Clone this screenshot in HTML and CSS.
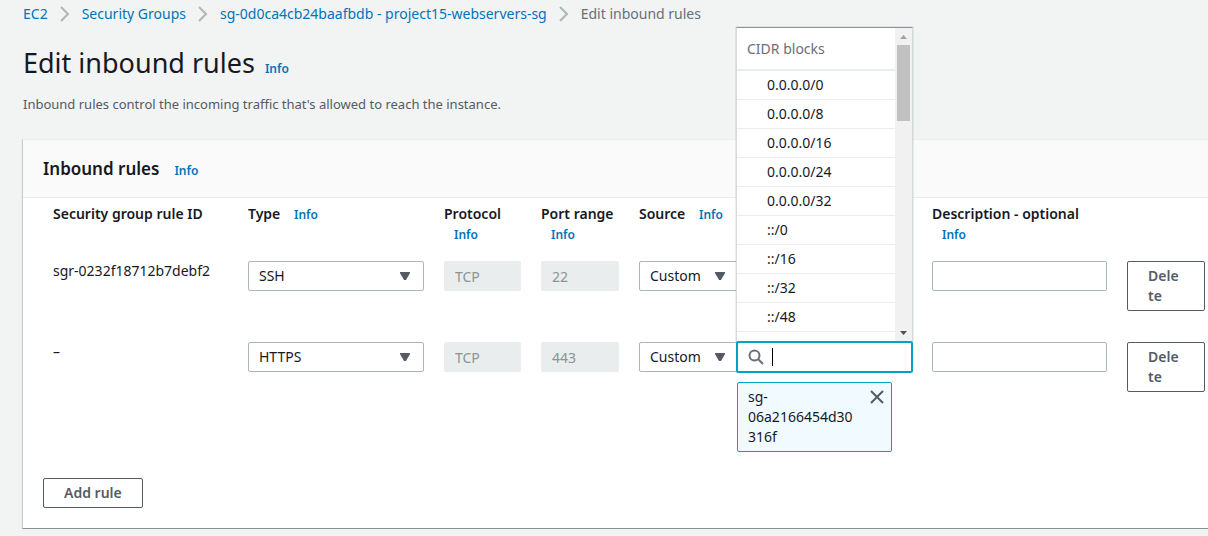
FILE: index.html
```html
<!DOCTYPE html>
<html lang="en">
<head>
<meta charset="utf-8">
<title>Edit inbound rules</title>
<link rel="stylesheet" href="styles.css">
</head>
<body>
<nav class="crumbs" aria-label="Breadcrumbs">
  <a href="#">EC2</a>
  <svg class="chevron" viewBox="0 0 10 16"><path d="M1 1l7 7-7 7"/></svg>
  <a href="#">Security Groups</a>
  <svg class="chevron" viewBox="0 0 10 16"><path d="M1 1l7 7-7 7"/></svg>
  <a href="#">sg-0d0ca4cb24baafbdb - project15-webservers-sg</a>
  <svg class="chevron" viewBox="0 0 10 16"><path d="M1 1l7 7-7 7"/></svg>
  <span class="current">Edit inbound rules</span>
</nav>
<main>
  <header class="page-head">
    <div class="title-row"><h1>Edit inbound rules</h1><a class="info" href="#">Info</a></div>
    <p>Inbound rules control the incoming traffic that's allowed to reach the instance.</p>
  </header>
  <section class="panel">
    <div class="panel-head"><h2>Inbound rules</h2><a class="info" href="#">Info</a></div>
    <div class="panel-body">
      <table class="rules">
        <thead>
          <tr>
            <th>Security group rule ID</th>
            <th>Type <a class="info" href="#">Info</a></th>
            <th>Protocol <a class="info" href="#">Info</a></th>
            <th>Port range <a class="info" href="#">Info</a></th>
            <th class="wide" colspan="2">Source <a class="info" href="#">Info</a></th>
            <th>Description - optional <a class="info" href="#">Info</a></th>
            <th></th>
          </tr>
        </thead>
        <tbody>
          <tr>
            <td>sgr-0232f18712b7debf2</td>
            <td><div class="select"><select aria-label="Type"><option>SSH</option></select><svg class="arrow" viewBox="0 0 10 8"><path d="M0 0h10v1L6 8H4L0 1z"/></svg></div></td>
            <td><input class="field" aria-label="Protocol" value="TCP" disabled></td>
            <td><input class="field" aria-label="Port range" value="22" disabled></td>
            <td class="flush"><div class="select"><select aria-label="Source type"><option>Custom</option></select><svg class="arrow" viewBox="0 0 10 8"><path d="M0 0h10v1L6 8H4L0 1z"/></svg></div></td>
            <td></td>
            <td><input class="field" aria-label="Description"></td>
            <td class="last"><button class="btn delete">Delete</button></td>
          </tr>
          <tr>
            <td>–</td>
            <td><div class="select"><select aria-label="Type"><option>HTTPS</option></select><svg class="arrow" viewBox="0 0 10 8"><path d="M0 0h10v1L6 8H4L0 1z"/></svg></div></td>
            <td><input class="field" aria-label="Protocol" value="TCP" disabled></td>
            <td><input class="field" aria-label="Port range" value="443" disabled></td>
            <td class="flush"><div class="select"><select aria-label="Source type"><option>Custom</option></select><svg class="arrow" viewBox="0 0 10 8"><path d="M0 0h10v1L6 8H4L0 1z"/></svg></div></td>
            <td class="source">
              <div class="combo">
                <div class="search">
                  <svg class="glass" viewBox="0 0 16 16"><circle cx="6.500" cy="6.500" r="5"/><path d="M10 10l5 5"/></svg>
                  <span class="caret"></span>
                  <input aria-label="Source">
                </div>
                <div class="dropdown">
                  <div class="options">
                    <div class="group">CIDR blocks</div>
                    <ul role="listbox" aria-label="CIDR blocks">
                      <li role="option">0.0.0.0/0</li>
                      <li role="option">0.0.0.0/8</li>
                      <li role="option">0.0.0.0/16</li>
                      <li role="option">0.0.0.0/24</li>
                      <li role="option">0.0.0.0/32</li>
                      <li role="option">::/0</li>
                      <li role="option">::/16</li>
                      <li role="option">::/32</li>
                      <li role="option">::/48</li>
                      <li role="option">::/64</li>
                    </ul>
                  </div>
                  <div class="scrollbar">
                    <svg class="up" viewBox="0 0 7 4"><path d="M0 4h7L3.500 0z"/></svg>
                    <div class="thumb"></div>
                    <svg class="down" viewBox="0 0 7 4"><path d="M0 0h7L3.500 4z"/></svg>
                  </div>
                </div>
              </div>
              <div class="token">
                <span>sg-06a2166454d30316f</span>
                <button class="close" aria-label="Remove"><svg viewBox="0 0 14 14"><path d="M1 1l12 12M13 1L1 13"/></svg></button>
              </div>
            </td>
            <td><input class="field" aria-label="Description"></td>
            <td class="last"><button class="btn delete">Delete</button></td>
          </tr>
        </tbody>
      </table>
      <button class="btn">Add rule</button>
    </div>
  </section>
</main>
</body>
</html>
```
FILE: styles.css
```css
* { box-sizing: border-box; }
body {
  margin: 0;
  background: #f2f3f3;
  color: #16191f;
  font: 14px/20px "Noto Sans", "Open Sans", sans-serif;
}
a { color: #0073bb; text-decoration: none; }
h1, h2, p, ul { margin: 0; padding: 0; }
button, input, select { font: inherit; color: inherit; }

.crumbs { display: flex; align-items: center; padding: 4px 23px 0; gap: 12px; }
.crumbs .current { color: #687078; }
.chevron { width: 10px; height: 16px; fill: none; stroke: #aab7b8; stroke-width: 2; }

.page-head { padding: 19px 23px 25px; }
.title-row { display: flex; align-items: baseline; gap: 10px; }
h1 { font-size: 27px; line-height: 40px; font-weight: 400; }
.page-head p { margin-top: 11px; font-size: 13px; color: #545b64; }
.info { font-size: 12px; font-weight: 600; }

.panel {
  margin-left: 22px;
  background: #fff;
  border-top: 1px solid #eaeded;
  border-left: 1px solid #c8cece;
  border-bottom: 1px solid #879596;
  box-shadow: 0 1px 1px #001c2430;
}
.panel-head {
  display: flex;
  align-items: baseline;
  gap: 15px;
  padding: 16px 20px;
  background: #fafafa;
  border-bottom: 1px solid #eaeded;
}
h2 { font-size: 17px; line-height: 25px; font-weight: 600; }
.panel-body { padding: 6px 0 20px 20px; }

.rules, .rules thead, .rules tbody { display: block; }
.rules tr {
  display: grid;
  grid-template-columns: 195fr 196fr 97fr 98fr 108fr 185fr 195fr 91fr;
}
.rules th, .rules td { min-width: 0; padding: 0 10px; text-align: left; }
.rules th { font-weight: 600; }
.rules th .info { display: inline-block; margin-left: 10px; }
.rules .wide { grid-column: span 2; }
.rules .flush { padding-right: 0; }
.rules .last { padding-right: 3px; }
.rules .source { padding-left: 0; }
.rules thead { padding-bottom: 16px; }
.rules tbody tr { min-height: 81px; }
.rules tbody tr:last-child { min-height: 136px; }

.field {
  width: 100%;
  height: 30px;
  padding: 0 10px;
  border: 1px solid #aab7b8;
  border-radius: 2px;
  background: #fff;
  display: block;
}
.field:disabled { background: #eaeded; border-color: #eaeded; color: #879596; }
.select { display: grid; align-items: center; }
.select > * { grid-area: 1 / 1; }
.select select {
  appearance: none;
  width: 100%;
  height: 30px;
  padding: 0 10px;
  border: 1px solid #aab7b8;
  border-radius: 2px;
  background: #fff;
}
.flush select { border-radius: 2px 0 0 2px; }
.arrow { width: 10px; height: 8px; margin-right: 14px; justify-self: end; fill: #545b64; pointer-events: none; }
.flush .arrow { margin-right: 12px; }

.btn {
  padding: 4px 20px;
  border: 1px solid #545b64;
  border-radius: 2px;
  background: #fff;
  color: #545b64;
  font-weight: 600;
}
.delete { width: 100%; text-align: left; word-break: break-all; padding-right: 22px; }

.combo { position: relative; margin: -1px -1px 0; }
.search {
  display: flex;
  align-items: center;
  height: 32px;
  padding: 0 10px;
  border: 2px solid #00a1c9;
  border-radius: 2px;
  background: #fff;
}
.glass { flex: none; width: 16px; height: 16px; fill: none; stroke: #687078; stroke-width: 2; }
.caret { flex: none; width: 1px; height: 18px; margin-left: 8px; background: #000; }
.search input { flex: 1; min-width: 0; height: 26px; border: 0; padding: 0; background: none; outline: 0; }

.dropdown {
  position: absolute;
  z-index: 2;
  left: 0;
  right: 0;
  bottom: 100%;
  height: 314px;
  display: flex;
  background: #fff;
  border: 1px solid #d5dbdb;
  border-top: 1px solid #879596;
  border-bottom: 0;
  box-shadow: 0 0 1px #879596;
}
.options { flex: 1; overflow: hidden; color: #16191f; }
.group { padding: 11px 10px 10px; color: #687078; border-bottom: 2px solid #eaeded; }
.options ul { list-style: none; }
.options li { padding: 4px 30px; border-bottom: 1px solid #eaeded; }
.scrollbar {
  width: 17px;
  display: flex;
  flex-direction: column;
  align-items: center;
  padding: 7px 2px 6px;
  background: #f1f1f1;
}
.scrollbar svg { width: 7px; height: 4px; }
.up { fill: #a3a3a3; }
.down { margin-top: auto; fill: #505050; }
.thumb { width: 100%; height: 76px; margin-top: 6px; background: #c1c1c1; }

.token {
  display: flex;
  justify-content: space-between;
  align-items: flex-start;
  margin: 9px 20px 0 0;
  padding: 4px 7px 4px 10px;
  border: 1px solid #00a1c9;
  border-radius: 2px;
  background: #f1faff;
}
.token span { word-break: break-word; }
.close { flex: none; display: flex; padding: 3px 0; margin-left: 14px; border: 0; background: none; }
.close svg { width: 14px; height: 14px; fill: none; stroke: #545b64; stroke-width: 2; }
```
